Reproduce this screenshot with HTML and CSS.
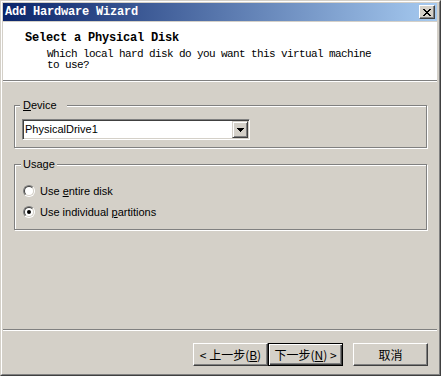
FILE: index.html
```html
<!DOCTYPE html>
<html>
<head>
<meta charset="utf-8">
<link rel="stylesheet" href="styles.css">
</head>
<body>
<div class="window">
  <div class="frame">
    <div class="titlebar">
      <span class="title">Add Hardware Wizard</span>
      <span class="close">
        <svg width="8" height="7" viewBox="0 0 8 7" shape-rendering="crispEdges"><path fill="#000" d="M0 0h2v1H0z M6 0h2v1H6z M1 1h2v1H1z M5 1h2v1H5z M2 2h4v1H2z M3 3h2v1H3z M2 4h4v1H2z M1 5h2v1H1z M5 5h2v1H5z M0 6h2v1H0z M6 6h2v1H6z"/></svg>
      </span>
    </div>
    <div class="header">
      <div class="h-title">Select a Physical Disk</div>
      <div class="h-sub">Which local hard disk do you want this virtual machine<br>to use?</div>
    </div>
    <div class="sep"></div>
    <div class="content">
      <div class="group device">
        <div class="legend legend-device"><u>D</u>evice</div>
        <div class="combo">
          <span class="combo-text">PhysicalDrive1</span>
          <span class="combo-btn">
            <svg width="7" height="4" viewBox="0 0 7 4" shape-rendering="crispEdges"><path fill="#000" d="M0 0h7v1H0z M1 1h5v1H1z M2 2h3v1H2z M3 3h1v1H3z"/></svg>
          </span>
        </div>
      </div>
      <div class="group usage">
        <div class="legend legend-usage">Usage</div>
        <div class="radio"><span class="radio-circle"><span class="radio-inner"></span></span><span class="radio-label">Use <u>e</u>ntire disk</span></div>
        <div class="radio second"><span class="radio-circle"><span class="radio-inner checked"></span></span><span class="radio-label">Use individual <u>p</u>artitions</span></div>
      </div>
    </div>
    <div class="sep"></div>
    <div class="footer">
      <button class="btn">&lt; 上一步(<u>B</u>)</button>
      <button class="btn default">下一步(<u>N</u>) &gt;</button>
      <button class="btn cancel">取消</button>
    </div>
  </div>
</div>
</body>
</html>
```

FILE: styles.css
```css
html, body {
  margin: 0;
  padding: 0;
}
body {
  background: #D4D0C8;
  font-family: "Liberation Sans", Arial, sans-serif;
  font-size: 11px;
  color: #000;
}
.window {
  width: 441px;
  height: 376px;
  box-sizing: border-box;
  border: 1px solid;
  border-color: #D4D0C8 #404040 #404040 #D4D0C8;
  background: #D4D0C8;
}
.frame {
  height: 100%;
  box-sizing: border-box;
  border: 1px solid;
  border-color: #fff #808080 #808080 #fff;
  padding: 1px 2px 2px 1px;
  display: flex;
  flex-direction: column;
}
.titlebar {
  height: 18px;
  flex: none;
  margin-bottom: 1px;
  background: linear-gradient(to right, #0A246A, #A6CAF0);
  display: flex;
  align-items: center;
  justify-content: space-between;
  padding: 0 2px 0 2px;
}
.title {
  color: #fff;
  font-family: "Liberation Mono", monospace;
  font-weight: bold;
  font-size: 12px;
  letter-spacing: -0.2px;
  line-height: 12px;
}
.close {
  width: 16px;
  height: 14px;
  box-sizing: border-box;
  background: #D4D0C8;
  border: 1px solid;
  border-color: #fff #404040 #404040 #fff;
  box-shadow: inset -1px -1px #808080;
  display: flex;
  align-items: center;
  justify-content: center;
  padding-right: 1px;
}
.close svg { display: block; }
.header {
  height: 58px;
  flex: none;
  box-sizing: border-box;
  background: #fff;
  padding-top: 10px;
}
.h-title {
  font-family: "Liberation Mono", monospace;
  font-weight: bold;
  font-size: 12px;
  letter-spacing: -0.2px;
  line-height: 12px;
  padding-left: 22px;
}
.h-sub {
  font-family: "Liberation Mono", monospace;
  font-size: 11px;
  letter-spacing: -0.6px;
  line-height: 11px;
  padding-left: 44px;
  margin-top: 5px;
}
.sep {
  flex: none;
  height: 0;
  border-top: 1px solid #808080;
  border-bottom: 1px solid #fff;
}
.content {
  height: 247px;
  flex: none;
  box-sizing: border-box;
  padding: 23px 10px 0 11px;
}
.group {
  border: 1px solid #808080;
  box-shadow: inset 1px 1px #fff, 1px 1px #fff;
}
.device {
  padding: 0 0 7px 7px;
}
.usage {
  margin-top: 16px;
  padding: 0 0 11px 8px;
}
.legend {
  width: fit-content;
  height: 13px;
  line-height: 13px;
  margin-top: -7px;
  background: #D4D0C8;
}
.legend-device {
  margin-left: -2px;
  padding: 0 10px 0 3px;
}
.legend-usage {
  margin-left: -2px;
  padding: 0 2px;
}
.combo {
  margin-top: 7px;
  width: 228px;
  height: 21px;
  box-sizing: border-box;
  border: 1px solid;
  border-color: #808080 #fff #fff #808080;
  box-shadow: inset 1px 1px #404040, inset -1px -1px #D4D0C8;
  padding: 1px;
  display: flex;
}
.combo-text {
  flex: 1;
  background: #fff;
  line-height: 17px;
  padding-left: 1px;
}
.combo-btn {
  width: 16px;
  height: 17px;
  box-sizing: border-box;
  background: #D4D0C8;
  border: 1px solid;
  border-color: #D4D0C8 #404040 #404040 #D4D0C8;
  box-shadow: inset 1px 1px #fff, inset -1px -1px #808080;
  display: flex;
  align-items: center;
  justify-content: center;
}
.combo-btn svg { display: block; }
.radio {
  margin-top: 14px;
  height: 12px;
  display: flex;
  align-items: center;
}
.radio.second {
  margin-top: 9px;
}
.radio-circle {
  width: 12px;
  height: 12px;
  box-sizing: border-box;
  border-radius: 50%;
  border: 1px solid;
  border-color: #808080 #fff #fff #808080;
  flex: none;
}
.radio-inner {
  display: flex;
  align-items: center;
  justify-content: center;
  width: 10px;
  height: 10px;
  box-sizing: border-box;
  border-radius: 50%;
  border: 1px solid;
  border-color: #404040 #D4D0C8 #D4D0C8 #404040;
  background: #fff;
}
.radio-inner.checked::after {
  content: "";
  width: 4px;
  height: 4px;
  border-radius: 50%;
  background: #000;
}
.radio-label {
  margin-left: 5px;
  line-height: 13px;
}
.footer {
  flex: 1;
  display: flex;
  justify-content: flex-end;
  align-items: flex-start;
  padding: 12px 9px 0 0;
}
.btn {
  width: 75px;
  height: 23px;
  box-sizing: border-box;
  margin: 0;
  padding: 0;
  background: #D4D0C8;
  border: 1px solid;
  border-color: #fff #404040 #404040 #fff;
  box-shadow: inset -1px -1px #808080;
  font-family: "Noto Sans CJK SC", sans-serif;
  font-size: 12px;
  line-height: 21px;
  color: #000;
  white-space: nowrap;
}
.btn.default {
  border-color: #000;
  box-shadow: inset 1px 1px #fff, inset -1px -1px #404040, inset -2px -2px #808080;
}
.btn.cancel {
  margin-left: 10px;
}
```
